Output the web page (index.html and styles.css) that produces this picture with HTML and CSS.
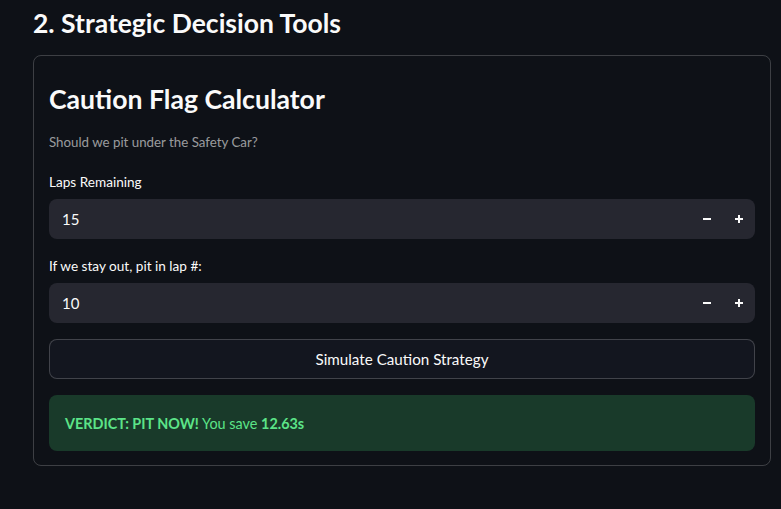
FILE: index.html
```html
<!DOCTYPE html>
<html>
<head>
<meta charset="utf-8">
<link rel="stylesheet" href="styles.css">
</head>
<body>
<div class="main">
  <h3 class="section-title">2. Strategic Decision Tools</h3>
  <div class="card">
    <h2 class="card-title">Caution Flag Calculator</h2>
    <p class="caption">Should we pit under the Safety Car?</p>
    <div class="field">
      <label class="label">Laps Remaining</label>
      <div class="number-input">
        <span class="value">15</span>
        <div class="steppers">
          <span class="step"><svg width="10" height="10" viewBox="0 0 10 10"><rect x="1" y="4" width="8" height="2" fill="#fafafa"/></svg></span>
          <span class="step"><svg width="10" height="10" viewBox="0 0 10 10"><rect x="1" y="4" width="8" height="2" fill="#fafafa"/><rect x="4" y="1" width="2" height="8" fill="#fafafa"/></svg></span>
        </div>
      </div>
    </div>
    <div class="field">
      <label class="label">If we stay out, pit in lap #:</label>
      <div class="number-input">
        <span class="value">10</span>
        <div class="steppers">
          <span class="step"><svg width="10" height="10" viewBox="0 0 10 10"><rect x="1" y="4" width="8" height="2" fill="#fafafa"/></svg></span>
          <span class="step"><svg width="10" height="10" viewBox="0 0 10 10"><rect x="1" y="4" width="8" height="2" fill="#fafafa"/><rect x="4" y="1" width="2" height="8" fill="#fafafa"/></svg></span>
        </div>
      </div>
    </div>
    <button class="btn">Simulate Caution Strategy</button>
    <div class="alert"><b>VERDICT: PIT NOW!</b> You save <b>12.63s</b></div>
  </div>
</div>
</body>
</html>
```
FILE: styles.css
```css
* { box-sizing: border-box; }
html, body { margin: 0; padding: 0; }
body {
  background: #0e1117;
  color: #fafafa;
  font-family: Lato, "Noto Sans", sans-serif;
  width: 781px;
  height: 509px;
  overflow: hidden;
}
.main {
  padding: 5px 10px 0 33px;
}
.section-title {
  margin: 0;
  font-size: 26.5px;
  font-weight: 700;
  line-height: 36px;
  height: 50px;
}
.card {
  border: 1px solid rgba(250,250,250,0.2);
  border-radius: 8px;
  padding: 23px 15px 14px 15px;
  display: flex;
  flex-direction: column;
}
.card-title {
  margin: 0;
  font-size: 26.6px;
  font-weight: 700;
  line-height: 40px;
}
.caption {
  margin: 13px 0 0 0;
  font-size: 13.3px;
  line-height: 20px;
  color: rgba(250,250,250,0.6);
}
.field { margin-top: 20px; display: flex; flex-direction: column; }
.field + .field { margin-top: 17px; }
.label {
  font-size: 13.6px;
  line-height: 20px;
  height: 27px;
}
.number-input {
  height: 40px;
  background: #262730;
  border-radius: 8px;
  display: flex;
  align-items: center;
  justify-content: space-between;
  padding-left: 13px;
}
.value { font-size: 15px; }
.steppers { display: flex; height: 100%; }
.step {
  width: 32px;
  display: flex;
  align-items: center;
  justify-content: center;
}
.btn {
  margin-top: 16px;
  height: 40px;
  background: #13161f;
  border: 1px solid rgba(250,250,250,0.2);
  border-radius: 8px;
  color: #fafafa;
  font-family: inherit;
  font-size: 15.2px;
}
.alert {
  margin-top: 16px;
  height: 56px;
  border-radius: 8px;
  background: #193a2a;
  color: #5ce488;
  font-size: 14.4px;
  display: flex;
  align-items: center;
  padding-left: 16px;
  white-space: pre;
}
.alert b { font-weight: 700; }
```
